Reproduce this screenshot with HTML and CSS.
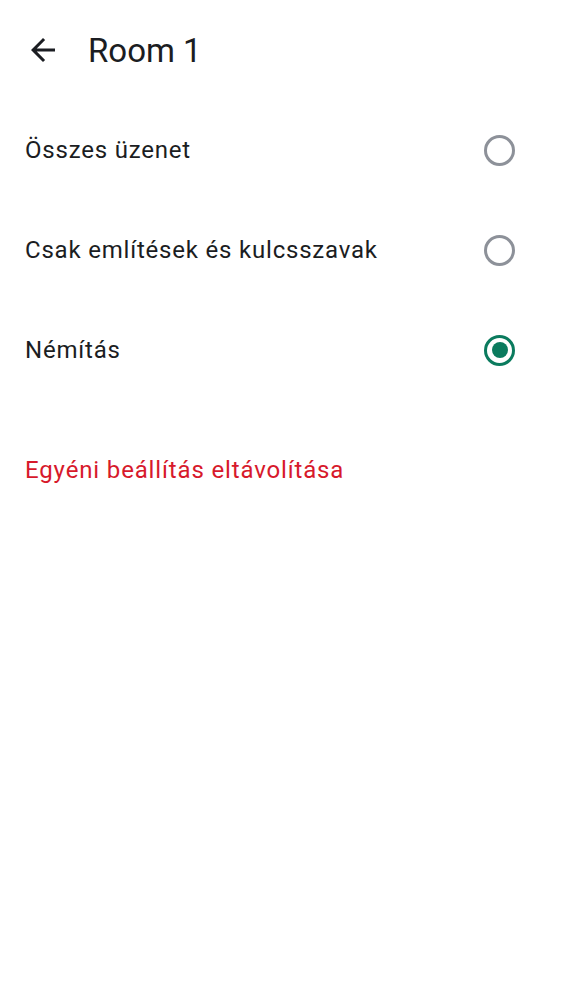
FILE: index.html
```html
<!DOCTYPE html>
<html lang="hu">
<head>
<meta charset="utf-8">
<link rel="stylesheet" href="styles.css">
</head>
<body>
<header class="bar">
  <button class="back" aria-label="Vissza">
    <svg width="36" height="36" viewBox="0 0 24 24"><path d="M20 11H7.83l5.59-5.59L12 4l-8 8 8 8 1.41-1.41L7.83 13H20v-2z" fill="#1b1d22"/></svg>
  </button>
  <h1 class="title">Room 1</h1>
</header>
<main class="list">
  <label class="row"><span class="label">Összes üzenet</span><span class="radio"></span></label>
  <label class="row"><span class="label">Csak említések és kulcsszavak</span><span class="radio"></span></label>
  <label class="row"><span class="label">Némítás</span><span class="radio on"></span></label>
  <div class="danger">Egyéni beállítás eltávolítása</div>
</main>
</body>
</html>
```
FILE: styles.css
```css
html, body { margin: 0; padding: 0; background: #fff; }
body { font-family: Roboto, "Noto Sans", sans-serif; color: #1b1d22; width: 562px; }
.bar { height: 100px; display: flex; align-items: center; }
.back { border: 0; background: none; padding: 0; margin-left: 25px; width: 36px; height: 36px; display: flex; align-items: center; justify-content: center; }
.title { margin: 0 0 0 27px; font-size: 33px; font-weight: 400; letter-spacing: 0; }
.list { display: flex; flex-direction: column; }
.row { height: 100px; display: flex; align-items: center; justify-content: space-between; padding: 0 47px 0 25px; }
.label { font-size: 24px; letter-spacing: 0.8px; }
.radio { width: 25px; height: 25px; border: 3px solid #8d9199; border-radius: 50%; display: flex; align-items: center; justify-content: center; }
.radio.on { border-color: #0b7b5e; }
.radio.on::after { content: ""; width: 16px; height: 16px; border-radius: 50%; background: #0b7b5e; }
.danger { margin-top: 56px; padding-left: 25px; font-size: 24px; letter-spacing: 0.85px; color: #d7192b; }
```
